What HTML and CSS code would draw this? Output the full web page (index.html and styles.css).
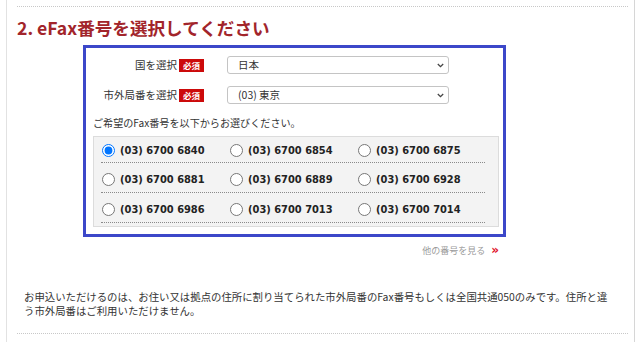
FILE: index.html
```html
<!DOCTYPE html>
<html lang="ja">
<head>
<meta charset="utf-8">
<title>eFax番号を選択</title>
<link rel="stylesheet" href="styles.css">
</head>
<body>
<div class="page">
  <div class="rule"></div>
  <h2 class="title">2. eFax番号を選択してください</h2>
  <div class="formbox">
    <div class="field">
      <div class="label">国を選択</div>
      <span class="badge">必須</span>
      <div class="select">
        <span class="select-text">日本</span>
        <svg class="chev" width="7" height="5" viewBox="0 0 7 5"><path d="M0.8 1 L3.5 3.7 L6.2 1" fill="none" stroke="#444" stroke-width="1.3"/></svg>
      </div>
    </div>
    <div class="field">
      <div class="label">市外局番を選択</div>
      <span class="badge">必須</span>
      <div class="select">
        <span class="select-text">(03) 東京</span>
        <svg class="chev" width="7" height="5" viewBox="0 0 7 5"><path d="M0.8 1 L3.5 3.7 L6.2 1" fill="none" stroke="#444" stroke-width="1.3"/></svg>
      </div>
    </div>
    <p class="desc">ご希望のFax番号を以下からお選びください。</p>
    <div class="numbers">
      <div class="nrow first">
        <label class="opt"><input type="radio" name="num" checked><span>(03) 6700 6840</span></label>
        <label class="opt"><input type="radio" name="num"><span>(03) 6700 6854</span></label>
        <label class="opt"><input type="radio" name="num"><span>(03) 6700 6875</span></label>
      </div>
      <div class="nrow">
        <label class="opt"><input type="radio" name="num"><span>(03) 6700 6881</span></label>
        <label class="opt"><input type="radio" name="num"><span>(03) 6700 6889</span></label>
        <label class="opt"><input type="radio" name="num"><span>(03) 6700 6928</span></label>
      </div>
      <div class="nrow">
        <label class="opt"><input type="radio" name="num"><span>(03) 6700 6986</span></label>
        <label class="opt"><input type="radio" name="num"><span>(03) 6700 7013</span></label>
        <label class="opt"><input type="radio" name="num"><span>(03) 6700 7014</span></label>
      </div>
    </div>
  </div>
  <div class="more"><span class="more-text">他の番号を見る</span><span class="more-arrow">»</span></div>
  <p class="note">お申込いただけるのは、お住い又は拠点の住所に割り当てられた市外局番のFax番号もしくは全国共通050のみです。住所と違<br>う市外局番はご利用いただけません。</p>
  <div class="rule bottom"></div>
</div>
</body>
</html>
```

FILE: styles.css
```css
* { box-sizing: border-box; }
html, body { margin: 0; padding: 0; background: #fff; }
body {
  font-family: "Noto Sans CJK JP", "Noto Sans", sans-serif;
  color: #333;
}
.page {
  margin-left: 6px;
  width: 629px;
  height: 342px;
  border-left: 1px solid #e2e2e2;
  border-right: 1px solid #d6d6d6;
  padding: 0 6px 0 10px;
  overflow: hidden;
}
.rule {
  margin-top: 6px;
  border-top: 1px dotted #c8c8c8;
}
.title {
  margin: 9px 0 0;
  font-size: 17.6px;
  line-height: 24px;
  font-weight: bold;
  color: #a2252b;
}
.formbox {
  margin: 5px 0 0 66px;
  width: 423px;
  height: 192px;
  border: 3px solid #3c47c9;
  padding: 8px 4px 7px 7px;
}
.field {
  display: flex;
  align-items: center;
  height: 18px;
  margin-bottom: 12px;
}
.label {
  width: 84px;
  text-align: right;
  font-size: 10.5px;
  line-height: 14px;
  color: #333;
}
.badge {
  margin-left: 2px;
  width: 25px;
  height: 13px;
  background: #cc0a0a;
  color: #fff;
  font-size: 8.5px;
  line-height: 13px;
  text-align: center;
  font-weight: bold;
}
.select {
  margin-left: 23px;
  width: 222px;
  height: 18px;
  border: 1px solid #c4c4c4;
  border-radius: 3px;
  display: flex;
  align-items: center;
  justify-content: space-between;
  padding: 0 4px 0 10px;
  background: #fff;
}
.select-text {
  font-size: 10.5px;
  line-height: 14px;
  color: #333;
}
.chev { display: block; }
.field + .field { margin-bottom: 0; }
.desc {
  margin: 11px 0 0;
  font-size: 10.1px;
  line-height: 15px;
  color: #333;
}
.numbers {
  margin-top: 6px;
  width: 406px;
  height: 91px;
  background: #f3f3f3;
  border: 1px solid #dcdcdc;
  padding: 0 13px 0 7px;
}
.nrow {
  display: flex;
  padding: 10px 0 6px;
  border-bottom: 1px dotted #8a8a8a;
}
.nrow.first { padding: 7px 0 5px; }
.opt {
  width: 128px;
  display: flex;
  align-items: center;
  height: 13px;
}
.opt input {
  margin: 0 0 0 1px;
  width: 13px;
  height: 13px;
  flex: none;
}
.opt span {
  margin-left: 5px;
  font-family: "DejaVu Sans", sans-serif;
  font-weight: bold;
  font-size: 9.9px;
  color: #222;
  line-height: 13px;
}
.more {
  margin: 3px 0 0 66px;
  width: 423px;
  text-align: right;
  padding-right: 7px;
  height: 14px;
  line-height: 14px;
}
.more-text {
  font-size: 9px;
  color: #9a9a9a;
}
.more-arrow {
  margin-left: 6px;
  font-size: 12px;
  font-weight: bold;
  color: #e0102a;
  font-family: "DejaVu Sans", sans-serif;
}
.note {
  margin: 36px 0 0;
  padding-left: 7px;
  font-size: 10.4px;
  line-height: 14px;
  color: #333;
  white-space: nowrap;
}
.rule.bottom { margin-top: 15px; }
```
